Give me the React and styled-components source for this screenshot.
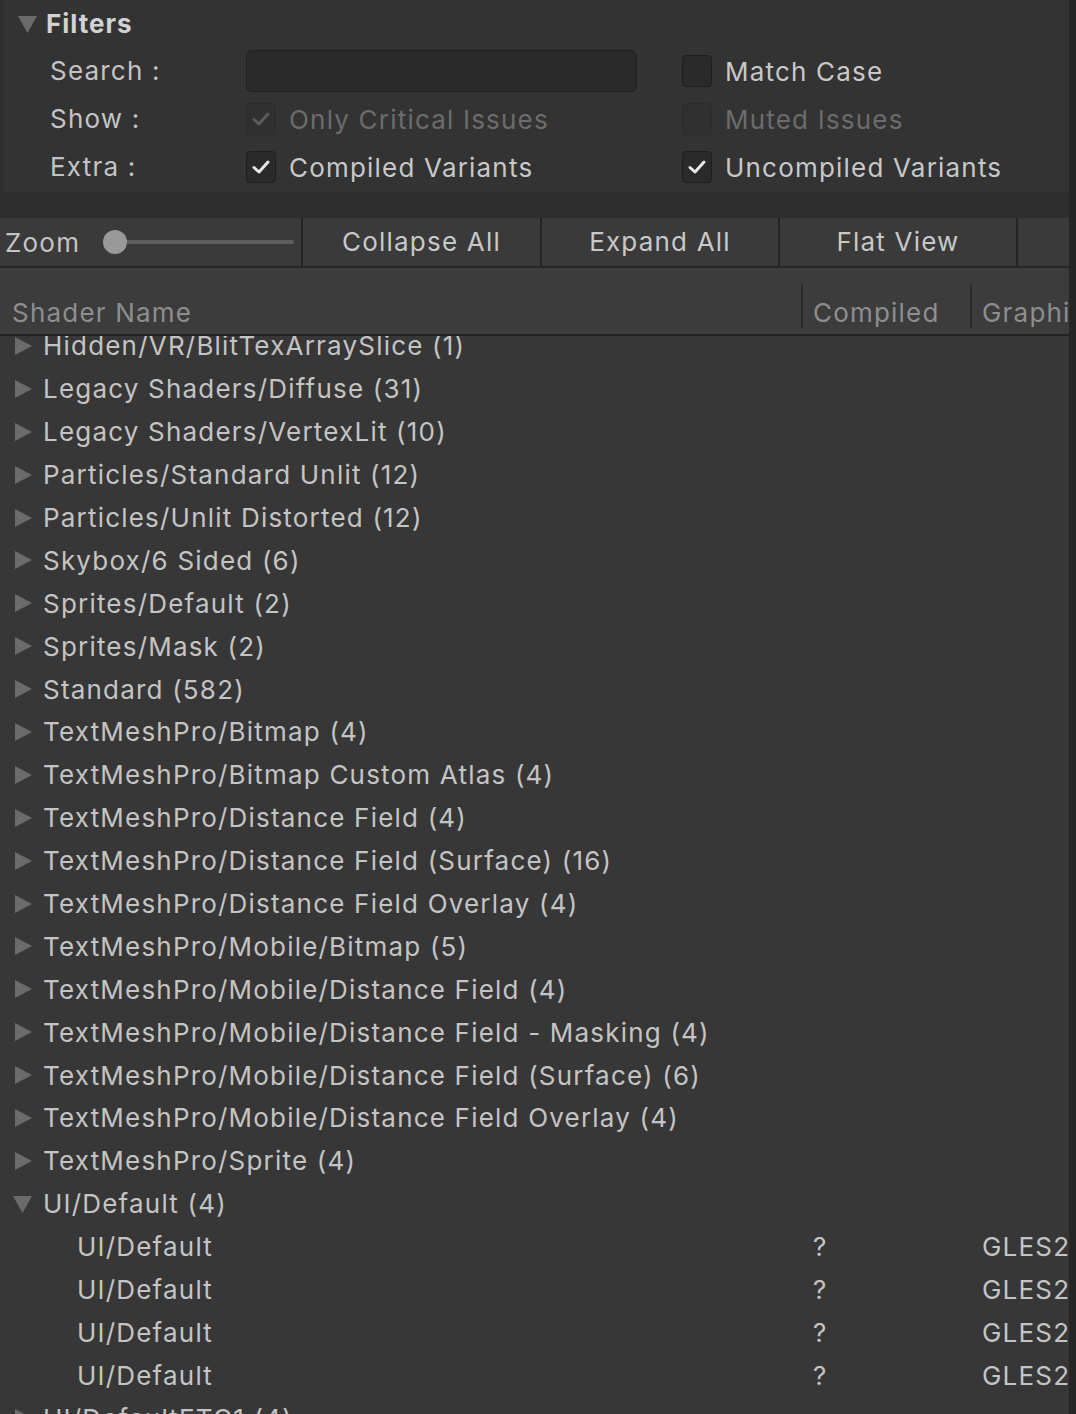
import React from "react";
import styled, { createGlobalStyle } from "styled-components";

const GlobalStyle = createGlobalStyle`
  html, body {
    margin: 0;
    padding: 0;
    background: #2e2e2e;
  }
  body {
    font-family: Inter, "Noto Sans", "Liberation Sans", sans-serif;
    color: #c4c4c4;
    letter-spacing: 1.2px;
  }
`;

const Window = styled.div`
  width: 1076px;
  height: 1414px;
  display: flex;
  overflow: hidden;
  background: #2e2e2e;
`;

const Main = styled.div`
  flex: 1;
  display: flex;
  flex-direction: column;
  min-width: 0;
`;

const Edge = styled.div`
  width: 7px;
  background: #262626;
`;

const FilterPanel = styled.div`
  margin-left: 4px;
  height: 192px;
  background: #333333;
  box-sizing: border-box;
`;

const FilterTitle = styled.div`
  display: flex;
  align-items: center;
  height: 47px;
  padding-left: 13px;
  gap: 8px;
  font-size: 26px;
  font-weight: 700;
  color: #d2d2d2;
  letter-spacing: 1px;
`;

const FilterRow = styled.div`
  display: grid;
  grid-template-columns: 196px 436px 1fr;
  align-items: center;
  height: 48px;
  padding-left: 46px;
  font-size: 26px;
`;

const Label = styled.span`
  color: #c4c4c4;
  margin-top: -2px;
`;

const SearchField = styled.div`
  width: 391px;
  height: 42px;
  box-sizing: border-box;
  background: #2a2a2a;
  border: 1px solid #202020;
  border-radius: 6px;
`;

const Check = styled.div`
  display: flex;
  align-items: center;
  gap: 13px;
  color: ${(p) => (p.$disabled ? "#6c6c6c" : "#c8c8c8")};
`;

const Box = styled.div`
  width: 30px;
  height: 32px;
  box-sizing: border-box;
  border-radius: 4px;
  background: ${(p) => (p.$disabled ? "#303030" : "#2a2a2a")};
  border: 1px solid ${(p) => (p.$disabled ? "#2c2c2c" : "#1f1f1f")};
  display: flex;
  align-items: center;
  justify-content: center;
`;

const Toolbar = styled.div`
  margin-top: 26px;
  height: 50px;
  display: flex;
  align-items: stretch;
  overflow: hidden;
  background: #3a3a3a;
  border-bottom: 2px solid #252525;
  box-sizing: border-box;
`;

const ZoomGroup = styled.div`
  flex: 0 0 301px;
  display: flex;
  align-items: center;
  padding-left: 5px;
  gap: 23px;
  font-size: 26px;
  box-sizing: border-box;
`;

const Slider = styled.div`
  position: relative;
  width: 191px;
  height: 24px;
  display: flex;
  align-items: center;
`;

const Track = styled.div`
  width: 100%;
  height: 4px;
  background: #5e5e5e;
  border-radius: 2px;
`;

const Thumb = styled.div`
  position: absolute;
  left: 0;
  top: 0;
  width: 24px;
  height: 24px;
  border-radius: 50%;
  background: #999999;
`;

const ToolButton = styled.div`
  flex: 0 0 ${(p) => p.$w}px;
  display: flex;
  align-items: center;
  justify-content: center;
  border-left: 2px solid #242424;
  font-size: 26px;
  color: #c8c8c8;
  padding-bottom: 2px;
  box-sizing: border-box;
`;

const Header = styled.div`
  display: grid;
  grid-template-columns: 801px 169px 1fr;
  height: 68px;
  background: #3c3c3c;
  border-bottom: 2px solid #232323;
  box-sizing: border-box;
  font-size: 26px;
  color: #8e8e8e;
`;

const HeaderCell = styled.div`
  display: flex;
  align-items: flex-end;
  padding: 0 0 6px 12px;
  white-space: nowrap;
  overflow: hidden;
  position: relative;
  ${(p) =>
    p.$sep &&
    `&::before {
      content: "";
      position: absolute;
      left: 0;
      top: 16px;
      bottom: 6px;
      width: 2px;
      background: #2a2a2a;
    }`}
`;

const List = styled.div`
  flex: 1;
  overflow: hidden;
  background: #373737;
`;

const ListInner = styled.div`
  margin-top: -11.5px;
`;

const Row = styled.div`
  display: grid;
  grid-template-columns: 801px 169px 1fr;
  height: 42.9px;
  align-items: center;
  font-size: 26px;
  color: #c4c4c4;
  white-space: nowrap;
`;

const NameCell = styled.div`
  display: flex;
  align-items: center;
  padding-left: ${(p) => (p.$child ? 77 : 12)}px;
  gap: 10px;
`;

const Cell = styled.div`
  padding-left: 12px;
  overflow: hidden;
`;

const Tick = ({ color }) => (
  <svg width="20" height="18" viewBox="0 0 20 18">
    <path d="M3 9.5 L8 14 L17 4" fill="none" stroke={color} strokeWidth="3" strokeLinecap="round" strokeLinejoin="round" />
  </svg>
);

const Arrow = ({ open }) =>
  open ? (
    <svg width="21" height="20" viewBox="0 0 21 20">
      <path d="M1 2 L20 2 L10.5 19 Z" fill="#6b6b6b" />
    </svg>
  ) : (
    <svg width="21" height="20" viewBox="0 0 21 20">
      <path d="M3 1 L20 10 L3 19 Z" fill="#6b6b6b" />
    </svg>
  );

const CheckItem = ({ checked, disabled, children }) => (
  <Check $disabled={disabled}>
    <Box $disabled={disabled}>{checked && <Tick color={disabled ? "#5c5c5c" : "#e8e8e8"} />}</Box>
    <span>{children}</span>
  </Check>
);

const groups = [
  "Hidden/VR/BlitTexArraySlice (1)",
  "Legacy Shaders/Diffuse (31)",
  "Legacy Shaders/VertexLit (10)",
  "Particles/Standard Unlit (12)",
  "Particles/Unlit Distorted (12)",
  "Skybox/6 Sided (6)",
  "Sprites/Default (2)",
  "Sprites/Mask (2)",
  "Standard (582)",
  "TextMeshPro/Bitmap (4)",
  "TextMeshPro/Bitmap Custom Atlas (4)",
  "TextMeshPro/Distance Field (4)",
  "TextMeshPro/Distance Field (Surface) (16)",
  "TextMeshPro/Distance Field Overlay (4)",
  "TextMeshPro/Mobile/Bitmap (5)",
  "TextMeshPro/Mobile/Distance Field (4)",
  "TextMeshPro/Mobile/Distance Field - Masking (4)",
  "TextMeshPro/Mobile/Distance Field (Surface) (6)",
  "TextMeshPro/Mobile/Distance Field Overlay (4)",
  "TextMeshPro/Sprite (4)",
];

export default function App() {
  return (
    <Window>
      <GlobalStyle />
      <Main>
        <FilterPanel>
          <FilterTitle>
            <Arrow open />
            <span>Filters</span>
          </FilterTitle>
          <FilterRow>
            <Label>Search :</Label>
            <SearchField />
            <CheckItem>Match Case</CheckItem>
          </FilterRow>
          <FilterRow>
            <Label>Show :</Label>
            <CheckItem checked disabled>Only Critical Issues</CheckItem>
            <CheckItem disabled>Muted Issues</CheckItem>
          </FilterRow>
          <FilterRow>
            <Label>Extra :</Label>
            <CheckItem checked>Compiled Variants</CheckItem>
            <CheckItem checked>Uncompiled Variants</CheckItem>
          </FilterRow>
        </FilterPanel>

        <Toolbar>
          <ZoomGroup>
            <span>Zoom</span>
            <Slider>
              <Track />
              <Thumb />
            </Slider>
          </ZoomGroup>
          <ToolButton $w={239}>Collapse All</ToolButton>
          <ToolButton $w={238}>Expand All</ToolButton>
          <ToolButton $w={238}>Flat View</ToolButton>
          <ToolButton $w={60} />
        </Toolbar>

        <Header>
          <HeaderCell>Shader Name</HeaderCell>
          <HeaderCell $sep>Compiled</HeaderCell>
          <HeaderCell $sep>Graphics API</HeaderCell>
        </Header>

        <List>
          <ListInner>
            {groups.map((g) => (
              <Row key={g}>
                <NameCell>
                  <Arrow />
                  <span>{g}</span>
                </NameCell>
              </Row>
            ))}
            <Row>
              <NameCell>
                <Arrow open />
                <span>UI/Default (4)</span>
              </NameCell>
            </Row>
            {[0, 1, 2, 3].map((i) => (
              <Row key={i}>
                <NameCell $child>UI/Default</NameCell>
                <Cell>?</Cell>
                <Cell>GLES2</Cell>
              </Row>
            ))}
            <Row>
              <NameCell>
                <Arrow />
                <span>UI/DefaultETC1 (4)</span>
              </NameCell>
            </Row>
          </ListInner>
        </List>
      </Main>
      <Edge />
    </Window>
  );
}
